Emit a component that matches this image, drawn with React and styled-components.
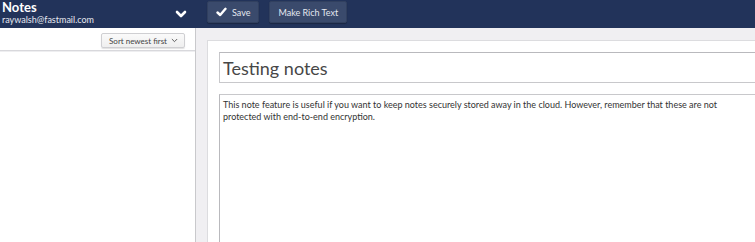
import React from "react";
import styled, { createGlobalStyle } from "styled-components";

const Global = createGlobalStyle`
  html, body { margin: 0; padding: 0; background: #fff; }
  body { font-family: Lato, "Open Sans", sans-serif; overflow: hidden; }
  #root { width: 755px; height: 242px; }
`;

const Page = styled.div`
  width: 755px;
  height: 242px;
  display: grid;
  grid-template-columns: 196px minmax(0, 1fr);
  grid-template-rows: 28px 1fr;
  overflow: hidden;
`;

const Header = styled.header`
  grid-column: 1 / 3;
  background: #22335a;
  display: grid;
  grid-template-columns: 196px 1fr;
  align-items: center;
`;

const Account = styled.div`
  display: flex;
  align-items: center;
  justify-content: space-between;
  padding: 0 9px 0 2px;
  height: 28px;
`;

const Identity = styled.div`
  display: flex;
  flex-direction: column;
  color: #fff;
  margin-top: -4px;
`;

const AppName = styled.span`
  font-size: 13px;
  font-weight: 700;
  line-height: 14px;
`;

const Email = styled.span`
  font-size: 9px;
  line-height: 11px;
  color: #e6e9f0;
`;

const Toolbar = styled.div`
  display: flex;
  gap: 10px;
  padding-left: 11px;
  height: 28px;
  align-items: center;
  padding-bottom: 4px;
  box-sizing: border-box;
`;

const HeadButton = styled.button`
  display: flex;
  align-items: center;
  gap: 5px;
  height: 22px;
  padding: 0 ${(p) => p.$pad || 9}px;
  background: #3a4a6c;
  border: 1px solid #31405f;
  border-radius: 2px;
  color: #e4e8f0;
  font-family: Lato, sans-serif;
  font-size: 9px;
  font-weight: 400;
  box-shadow: 0 1px 1px rgba(0,0,0,0.25);
`;

const Sidebar = styled.aside`
  border-right: 1px solid #c9c9cc;
  background: #fff;
`;

const SideBar = styled.div`
  height: 22px;
  border-bottom: 1px solid #d8d8dc;
  display: flex;
  justify-content: flex-end;
  align-items: flex-start;
  padding-right: 10px;
  box-shadow: 0 1px 0 #eeeef0;
`;

const SortButton = styled.button`
  display: flex;
  align-items: center;
  gap: 4px;
  height: 15px;
  margin-top: 5px;
  padding: 0 6px 0 7px;
  background: linear-gradient(#fafafa, #efefef);
  border: 1px solid #cfcfd2;
  border-radius: 2px;
  font-family: Lato, sans-serif;
  font-size: 8px;
  color: #444;
  box-shadow: 0 1px 1px rgba(0,0,0,0.12);
`;

const Editor = styled.main`
  background: #f0eff2;
  padding: 12px 0 0 11px;
  min-width: 0;
`;

const Card = styled.section`
  background: #fff;
  height: 100%;
  box-shadow: inset 1px 1px 0 #dcdcdf;
  padding: 12px 0 0 12px;
  box-sizing: border-box;
  display: flex;
  flex-direction: column;
  gap: 11px;
`;

const TitleInput = styled.div`
  height: 29px;
  border: 1px solid #c8c8cb;
  border-top-color: #b9b9bd;
  border-right: none;
  display: flex;
  align-items: center;
  padding-left: 3px;
  font-size: 18px;
  color: #474747;
`;

const Body = styled.div`
  flex: 1;
  border: 1px solid #c8c8cb;
  border-left-color: #b9b9bd;
  border-right: none;
  border-bottom: none;
  padding: 4px 14px 0 3px;
  font-size: 9px;
  line-height: 12px;
  color: #333;
`;

const Chevron = ({ size = 12, color = "#fff", w = 3 }) => (
  <svg width={size} height={size} viewBox="0 0 12 12">
    <path d="M2 4 L6 8 L10 4" fill="none" stroke={color} strokeWidth={w} strokeLinecap="round" strokeLinejoin="round" />
  </svg>
);

const Check = () => (
  <svg width="11" height="10" viewBox="0 0 11 10">
    <path d="M1.5 5.5 L4.2 8 L9.5 1.8" fill="none" stroke="#fff" strokeWidth="2.4" strokeLinecap="round" strokeLinejoin="round" />
  </svg>
);

export default function App() {
  return (
    <>
      <Global />
      <Page>
        <Header>
          <Account>
            <Identity>
              <AppName>Notes</AppName>
              <Email>raywalsh@fastmail.com</Email>
            </Identity>
            <Chevron size={12} w={2.6} />
          </Account>
          <Toolbar>
            <HeadButton $pad={8}>
              <Check />
              Save
            </HeadButton>
            <HeadButton $pad={8}>Make Rich Text</HeadButton>
          </Toolbar>
        </Header>
        <Sidebar>
          <SideBar>
            <SortButton>
              Sort newest first
              <Chevron size={7} color="#555" w={1.6} />
            </SortButton>
          </SideBar>
        </Sidebar>
        <Editor>
          <Card>
            <TitleInput>Testing notes</TitleInput>
            <Body>
              This note feature is useful if you want to keep notes securely stored away in the cloud. However, remember that these are not protected with end-to-end encryption.
            </Body>
          </Card>
        </Editor>
      </Page>
    </>
  );
}
